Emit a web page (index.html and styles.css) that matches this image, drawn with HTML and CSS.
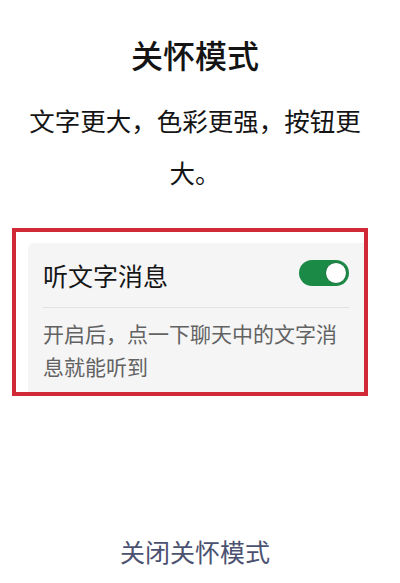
FILE: index.html
```html
<!DOCTYPE html>
<html lang="zh-CN">
<head>
    <meta charset="UTF-8">
    <meta name="viewport" content="width=device-width, initial-scale=1.0">
    <title>关怀模式</title>
    <link rel="stylesheet" href="styles.css">
</head>
<body>
    <div class="page">
        <h1 class="title">关怀模式</h1>
        <p class="subtitle">文字更大，色彩更强，按钮更大。</p>

        <div class="highlight">
            <div class="card">
                <div class="card-row">
                    <span class="card-label">听文字消息</span>
                    <span class="switch on"><span class="knob"></span></span>
                </div>
                <div class="divider"></div>
                <p class="card-desc">开启后，点一下聊天中的文字消息就能听到</p>
            </div>
        </div>

        <a href="#" class="close-link">关闭关怀模式</a>
    </div>
</body>
</html>
```

FILE: styles.css
```css
body {
    margin: 0;
    padding: 0;
    background: #fff;
    font-family: 'Noto Sans CJK SC', 'Noto Sans', sans-serif;
    color: #141414;
}

.page {
    display: flex;
    flex-direction: column;
    width: 400px;
}

/* Header */
.title {
    margin: 34px 10px 0 0;
    font-size: 32px;
    line-height: 40px;
    font-weight: 500;
    text-align: center;
}

.subtitle {
    margin: 20px 10px 0 0;
    padding: 0 24px;
    font-size: 25.5px;
    line-height: 52px;
    text-align: center;
}

/* Red highlight around the setting card */
.highlight {
    margin: 30px 32px 0 12px;
    border: 4px solid #d12a36;
    padding: 11px 0 0 12px;
}

.card {
    background: #f5f5f6;
    border-radius: 6px 0 0 0;
}

.card-row {
    display: flex;
    justify-content: space-between;
    align-items: center;
    height: 64px;
    padding: 0 15px;
}

.card-label {
    font-size: 25px;
    line-height: 30px;
    color: #161616;
}

.switch {
    position: relative;
    width: 50px;
    height: 26px;
    border-radius: 13px;
    background: #e0e0e0;
    margin-top: -4px;
}

.switch.on {
    background: #1b8a47;
}

.switch .knob {
    position: absolute;
    top: 2px;
    left: 2px;
    width: 20px;
    height: 20px;
    border-radius: 50%;
    background: #fff;
    border: 1px solid #15703a;
}

.switch.on .knob {
    left: auto;
    right: 2px;
}

.divider {
    height: 1px;
    margin: 0 15px;
    background: #e2e2e4;
}

.card-desc {
    margin: 0;
    padding: 9px 15px 9px;
    font-size: 21px;
    line-height: 33px;
    color: #626262;
}

/* Bottom link */
.close-link {
    margin: 140px 10px 0 0;
    font-size: 25px;
    line-height: 30px;
    text-align: center;
    color: #4b5170;
    text-decoration: none;
}
```
